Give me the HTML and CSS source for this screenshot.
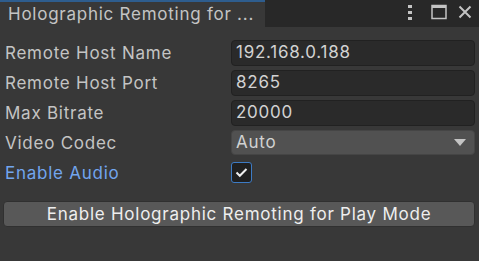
FILE: index.html
```html
<!DOCTYPE html>
<html lang="en">

<head>
  <meta charset="UTF-8">
  <title>Holographic Remoting</title>
  <link rel="stylesheet" href="styles.css">
</head>

<body>

  <div class="tabbar">
    <div class="tab">Holographic Remoting for ...</div>
    <div class="tools">
      <svg class="icon kebab" width="6" height="16" viewBox="0 0 6 16">
        <rect x="1" y="1" width="4" height="3" fill="#c4c4c4" />
        <rect x="1" y="7" width="4" height="3" fill="#c4c4c4" />
        <rect x="1" y="13" width="4" height="3" fill="#c4c4c4" />
      </svg>
      <svg class="icon" width="16" height="16" viewBox="0 0 16 16">
        <rect x="1" y="1.5" width="14" height="13" fill="none" stroke="#c4c4c4" stroke-width="1.5" />
        <rect x="1" y="1" width="14" height="3" fill="#c4c4c4" />
      </svg>
      <svg class="icon" width="14" height="14" viewBox="0 0 14 14">
        <path d="M1.5 1.5 L12.5 12.5 M12.5 1.5 L1.5 12.5" stroke="#c4c4c4" stroke-width="2" />
      </svg>
    </div>
  </div>

  <div class="panel">
    <div class="row">
      <label>Remote Host Name</label>
      <div class="field">192.168.0.188</div>
    </div>
    <div class="row">
      <label>Remote Host Port</label>
      <div class="field">8265</div>
    </div>
    <div class="row">
      <label>Max Bitrate</label>
      <div class="field">20000</div>
    </div>
    <div class="row">
      <label>Video Codec</label>
      <div class="field dropdown">Auto <span class="arrow"></span></div>
    </div>
    <div class="row">
      <label class="active">Enable Audio</label>
      <div class="check">
        <svg width="13" height="11" viewBox="0 0 13 11">
          <path d="M1.5 5.5 L4.8 8.8 L11.5 2" fill="none" stroke="#eeeeee" stroke-width="2" />
        </svg>
      </div>
    </div>

    <button class="play">Enable Holographic Remoting for Play Mode</button>
  </div>

</body>

</html>
```

FILE: styles.css
```css
* {
  font-family: 'Inter', 'Noto Sans', sans-serif;
  letter-spacing: 0.75px;
  box-sizing: border-box;
}

body {
  background-color: #383838;
  margin: 0;
  color: #c4c4c4;
}

.tabbar {
  display: flex;
  height: 27px;
  background-color: #282828;
}

.tab {
  width: 265px;
  background-color: #383838;
  border-top: 2px solid #2e5d8e;
  font-size: 17px;
  padding-left: 8px;
  line-height: 24px;
  color: #c4c4c4;
}

.tools {
  flex: 1;
  display: flex;
  justify-content: flex-end;
  align-items: center;
  gap: 11px;
  padding-right: 7px;
  padding-bottom: 3px;
}

.kebab {
  margin-right: 7px;
}

.panel {
  padding: 11px 4px 0 5px;
}

.row {
  display: flex;
  align-items: center;
  height: 30px;
}

label {
  width: 226px;
  font-size: 17px;
}

label.active {
  color: #72a5ee;
}

.field {
  flex: 1;
  height: 26px;
  background-color: #2a2a2a;
  border: 1px solid #212121;
  border-radius: 4px;
  font-size: 17px;
  color: #d2d2d2;
  padding-left: 4px;
  line-height: 23px;
}

.dropdown {
  display: flex;
  justify-content: space-between;
  align-items: center;
  background-color: #515151;
  border-color: #454545;
  height: 25px;
  margin-top: -1px;
}

.arrow {
  width: 0;
  height: 0;
  border-left: 6px solid transparent;
  border-right: 6px solid transparent;
  border-top: 7px solid #c4c4c4;
  margin-right: 8px;
}

.check {
  width: 21px;
  height: 21px;
  margin-top: -2px;
  background-color: #202020;
  border: 1px solid #3d7bc4;
  border-radius: 3px;
  display: flex;
  align-items: center;
  justify-content: center;
}

.play {
  display: block;
  width: 472px;
  margin: 13px 0 0 -2px;
  height: 26px;
  background-color: #585858;
  border: 1px solid #303030;
  border-radius: 4px;
  color: #eeeeee;
  font-size: 17px;
  padding: 0;
}
```
